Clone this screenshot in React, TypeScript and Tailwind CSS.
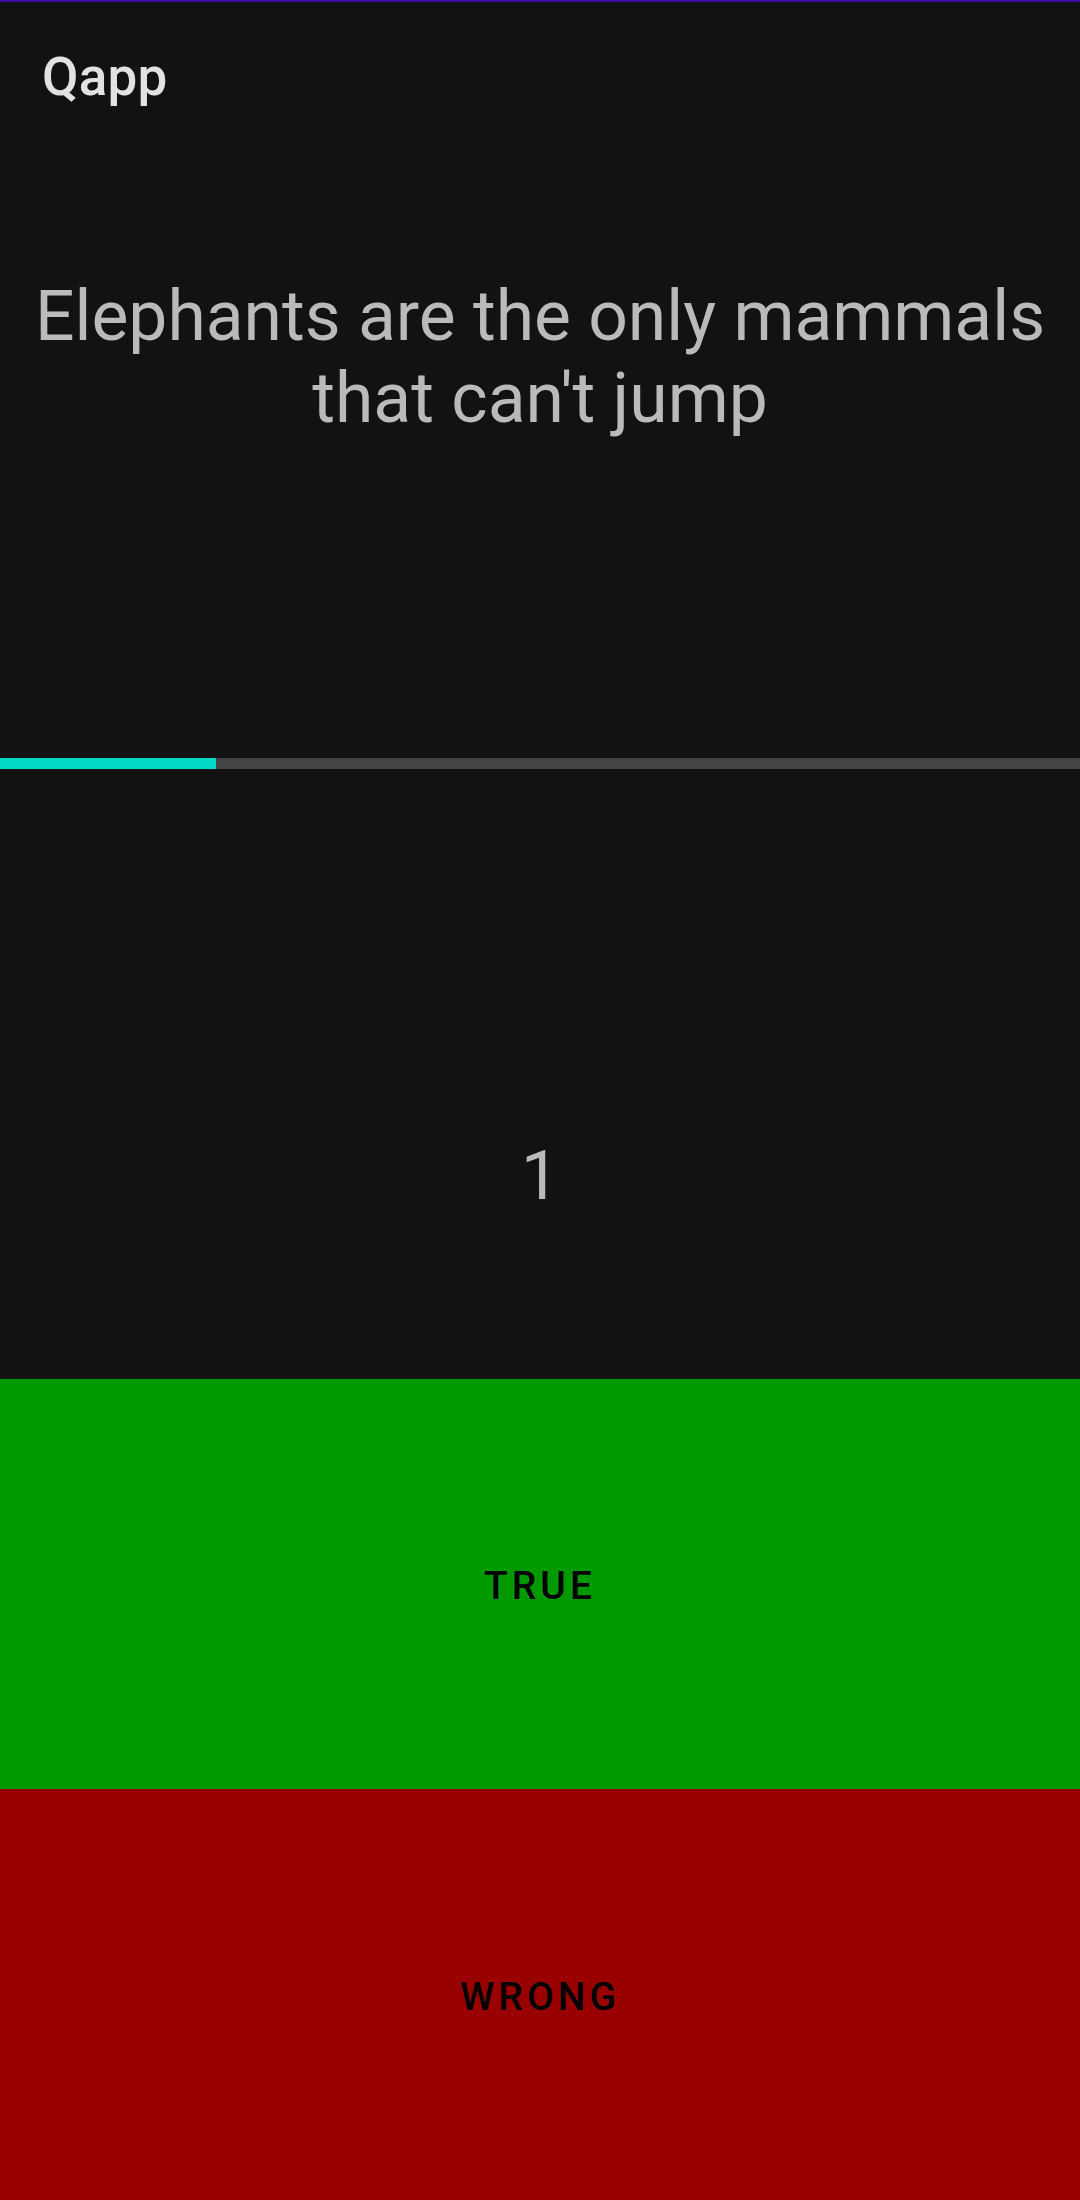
import React from "react";

export default function App() {
  const progress = 216;
  return (
    <div
      className="w-[1080px] h-[2200px] bg-[#121212] flex flex-col overflow-hidden"
      style={{ fontFamily: "Roboto, 'Noto Sans', sans-serif" }}
    >
      <div className="h-[2px] bg-[#3a0ca3] shrink-0" />
      <div className="h-[145px] shrink-0 flex items-center pl-[42px] pt-[5px]">
        <span className="text-[53px] font-medium text-[#e2e2e2] leading-none tracking-[0.2px]">Qapp</span>
      </div>
      <div className="h-[611px] shrink-0 pt-[128px] px-[30px]">
        <p className="text-center text-[69.6px] leading-[82px] text-[#bababa]">
          Elephants are the only mammals that can't jump
        </p>
      </div>
      <div className="h-[11px] shrink-0 bg-[#444444] flex">
        <div className="h-full bg-[#03dac5]" style={{ width: progress }} />
      </div>
      <div className="h-[610px] shrink-0 pt-[367px] flex justify-center">
        <span className="text-[68px] leading-[80px] text-[#bababa]">1</span>
      </div>
      <div className="h-[410px] shrink-0 bg-[#009900] flex items-center justify-center pt-[5px]">
        <span className="text-[39px] font-medium text-black tracking-[4px] leading-none">TRUE</span>
      </div>
      <div className="flex-1 bg-[#990000] flex items-center justify-center pt-[5px]">
        <span className="text-[39px] font-medium text-black tracking-[4px] leading-none">WRONG</span>
      </div>
    </div>
  );
}
